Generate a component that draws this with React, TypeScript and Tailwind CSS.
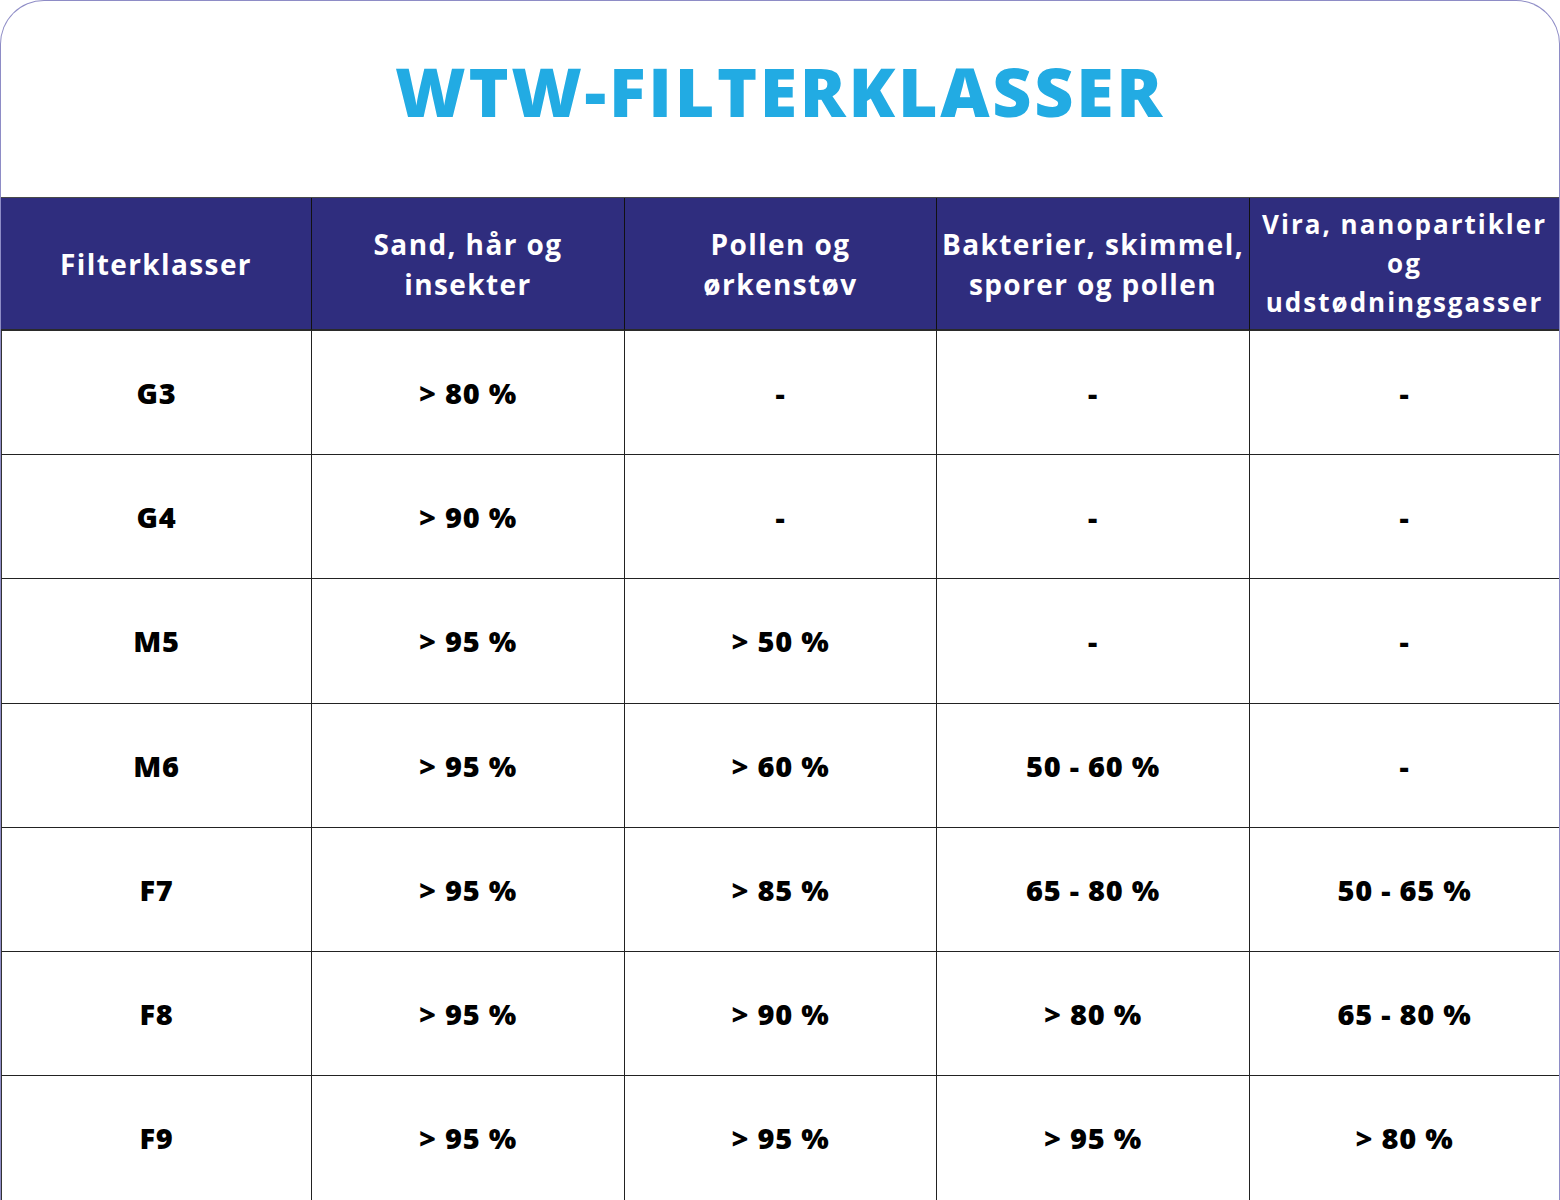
import React from "react";

const headers = [
  ["Filterklasser"],
  ["Sand, hår og", "insekter"],
  ["Pollen og", "ørkenstøv"],
  ["Bakterier, skimmel,", "sporer og pollen"],
  ["Vira, nanopartikler", "og", "udstødningsgasser"],
];

const rows = [
  ["G3", "> 80 %", "-", "-", "-"],
  ["G4", "> 90 %", "-", "-", "-"],
  ["M5", "> 95 %", "> 50 %", "-", "-"],
  ["M6", "> 95 %", "> 60 %", "50 - 60 %", "-"],
  ["F7", "> 95 %", "> 85 %", "65 - 80 %", "50 - 65 %"],
  ["F8", "> 95 %", "> 90 %", "> 80 %", "65 - 80 %"],
  ["F9", "> 95 %", "> 95 %", "> 95 %", "> 80 %"],
];

const font = { fontFamily: "'Open Sans', Lato, sans-serif" };

export default function App() {
  return (
    <div className="w-[1560px] h-[1200px] bg-white" style={font}>
      <div className="w-full h-full rounded-t-[44px] border border-b-0 border-[#8e8cc6] overflow-hidden flex flex-col">
        <div className="h-[196px] flex items-center justify-center pb-[16px]">
          <h1 className="text-[68px] font-extrabold text-[#22abe3] tracking-[2.7px] leading-none">
            WTW-FILTERKLASSER
          </h1>
        </div>
        <div className="border-t border-[#4a4a4a] grid grid-cols-[311px_313px_312px_313px_1fr] grid-rows-[133px_124px_124px_125px_124px_124px_124px_1fr] flex-1">
          {headers.map((h, i) => (
            <div
              key={i}
              className={`bg-[#2f2d7e] text-white font-bold flex flex-col items-center justify-center text-center border-b-2 border-[#2a2a2a] ${
                i < 4 ? "border-r border-r-[#111]" : ""
              } ${
                i === 4
                  ? "text-[26px] leading-[39px] tracking-[2px]"
                  : "text-[28px] leading-[40px] tracking-[1.4px]"
              }`}
            >
              {h.map((l, j) => (
                <span key={j}>{l}</span>
              ))}
            </div>
          ))}
          {rows.map((r, ri) =>
            r.map((c, ci) => (
              <div
                key={`${ri}-${ci}`}
                className={`flex items-center justify-center text-[29px] tracking-[0.75px] font-extrabold text-black ${
                  ci < 4 ? "border-r border-[#222]" : ""
                } ${ri < rows.length - 1 ? "border-b border-[#222]" : ""} ${
                  ci === 0 ? "border-l border-l-[#333]" : ""
                }`}
              >
                {c}
              </div>
            ))
          )}
        </div>
      </div>
    </div>
  );
}
